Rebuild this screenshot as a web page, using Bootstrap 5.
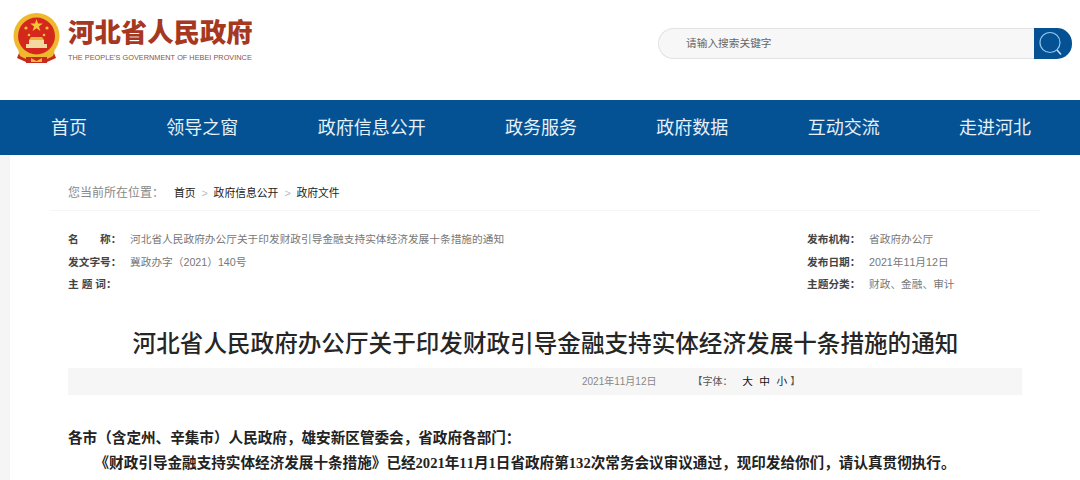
<!DOCTYPE html>
<html lang="zh-CN">
<head>
<meta charset="utf-8">
<title>河北省人民政府</title>
<link rel="stylesheet" href="https://cdn.jsdelivr.net/npm/bootstrap@5.3.0/dist/css/bootstrap.min.css">
<style>
html,body{overflow:hidden;height:480px;background:#fff}
body{font-family:"Liberation Sans","Noto Sans CJK SC",sans-serif;color:#333;text-spacing-trim:space-all;font-kerning:none}
.top-bar{height:100px;padding:12px 8px 0 13px}
.brand-name{font-size:26.4px;font-weight:900;color:#a5381f;line-height:34px}
.brand-en{font-size:7.35px;color:#8a5347;line-height:10px;margin-top:3px;white-space:nowrap}
.brand-text{margin-left:8px;margin-top:4px}
.search-box{width:376px;height:31px;margin-top:16px;background:#f7f7f7;border:1px solid #e3e3e3;border-right:0;border-radius:16px 0 0 16px;padding-left:27px;font-size:10.7px;line-height:29px;color:#666}
.search-btn{width:38px;height:31px;margin-top:16px;background:#045294;border-radius:0 15px 15px 0}
.main-nav{background:#045294;height:55px;padding:0 49px 0 51px}
.main-nav a{color:#e6f0f8;font-size:18px;text-decoration:none;line-height:57px}
.page-shell{border-left:10px solid #f5f5f5;height:325px}
.page-wrap{margin-right:40px;height:325px;position:relative}
.crumbs{height:56px;margin-left:40px;padding:21px 0 0 18px;font-size:10.8px;line-height:35px;color:#222;border-bottom:1px solid #f5f5f5}
.crumb-lead{font-size:12px;color:#888;margin-right:10px}
.crumb-sep{color:#bbb;margin:0 6px;width:6px;text-align:center}
.meta{padding:17px 0 0 58px;font-size:10.7px;color:#777;line-height:22.5px}
.meta-l{width:739px}
.meta b{color:#444;font-weight:700;display:inline-block;width:62px}
.doc-title{font-size:23.6px;font-weight:500;color:#262626;text-align:center;margin:0;padding:29px 0 0 41px;line-height:38px;white-space:nowrap}
.date-bar{margin:5px 18px 0 58px;height:27px;background:#f6f6f6;font-size:10px;color:#888;line-height:27px;padding-left:514px}
.date-bar .font-ctl{margin-left:36px;color:#555}
.date-bar .font-ctl span{color:#111;font-size:10.7px;margin:0 3.2px}
.date-bar .font-ctl span:first-child{margin-left:7px}
.doc-body{position:absolute;left:58px;top:271px;width:1000px;font-family:"Liberation Serif","Noto Sans CJK SC",serif;font-size:14.6px;font-weight:700;color:#222;line-height:25px;white-space:nowrap}
.doc-body p{margin:0}
.doc-body .ind{padding-left:26.5px}
</style>
</head>
<body>
<header class="top-bar d-flex justify-content-between">
  <div class="d-flex align-items-start">
    <svg width="47" height="52" viewBox="0 0 47 52" aria-hidden="true">
      <path d="M8 36 L4 46 L13 50 H34 L43 46 L39 36Z" fill="#c62a1c"/>
      <circle cx="23.5" cy="24" r="23" fill="#efb92e"/>
      <circle cx="23.5" cy="24" r="18.5" fill="#d5281c"/>
      <polygon points="23.5,7 25,11.6 29.8,11.6 25.9,14.4 27.4,19 23.5,16.2 19.6,19 21.1,14.4 17.2,11.6 22,11.6" fill="#f6c53a"/>
      <circle cx="13" cy="16" r="1.6" fill="#f6c53a"/><circle cx="34" cy="16" r="1.6" fill="#f6c53a"/>
      <circle cx="16" cy="23" r="1.3" fill="#f6c53a"/><circle cx="31" cy="23" r="1.3" fill="#f6c53a"/>
      <path d="M13 36 V32 H16 V28 H31 V32 H34 V36Z" fill="#f3d9a0"/>
      <path d="M18 25 H29 L31 28 H16Z" fill="#e9b33a"/>
      <path d="M5 38 Q23.5 52 42 38 L40 44 Q23.5 54 7 44Z" fill="#efb92e"/>
      <rect x="13" y="45" width="21" height="6" fill="#c62a1c"/>
      <path d="M18 46 L23.5 49 L29 46 V50 H18Z" fill="#efb92e"/>
    </svg>
    <div class="brand-text">
      <div class="brand-name">河北省人民政府</div>
      <div class="brand-en">THE PEOPLE'S GOVERNMENT OF HEBEI PROVINCE</div>
    </div>
  </div>
  <div class="d-flex">
    <div class="search-box">请输入搜索关键字</div>
    <div class="search-btn d-flex align-items-center">
      <svg width="27" height="27" class="ms-1" viewBox="0 0 27 27" aria-hidden="true"><circle cx="12" cy="12.5" r="10" fill="none" stroke="#8fc4ec" stroke-width="1.2"/><path d="M19 20 L23 24.5" stroke="#cfe6f8" stroke-width="1.4" fill="none"/></svg>
    </div>
  </div>
</header>
<nav class="main-nav d-flex justify-content-between">
  <a href="#">首页</a><a href="#">领导之窗</a><a href="#">政府信息公开</a><a href="#">政务服务</a><a href="#">政府数据</a><a href="#">互动交流</a><a href="#">走进河北</a>
</nav>
<div class="page-shell">
<main class="page-wrap">
  <div class="crumbs d-flex">
    <span class="crumb-lead">您当前所在位置：</span><span>首页</span><span class="crumb-sep">&gt;</span><span>政府信息公开</span><span class="crumb-sep">&gt;</span><span>政府文件</span>
  </div>
  <div class="meta d-flex">
    <div class="meta-l">
      <div><b>名　　称：</b>河北省人民政府办公厅关于印发财政引导金融支持实体经济发展十条措施的通知</div>
      <div><b>发文字号：</b>冀政办字（2021）140号</div>
      <div><b>主 题 词：</b></div>
    </div>
    <div class="meta-r">
      <div><b>发布机构：</b>省政府办公厅</div>
      <div><b>发布日期：</b>2021年11月12日</div>
      <div><b>主题分类：</b>财政、金融、审计</div>
    </div>
  </div>
  <h1 class="doc-title">河北省人民政府办公厅关于印发财政引导金融支持实体经济发展十条措施的通知</h1>
  <div class="date-bar">2021年11月12日<span class="font-ctl">【字体： <span>大</span><span>中</span><span>小</span>】</span></div>
  <div class="doc-body">
    <p>各市（含定州、辛集市）人民政府，雄安新区管委会，省政府各部门：</p>
    <p class="ind">《财政引导金融支持实体经济发展十条措施》已经2021年11月1日省政府第132次常务会议审议通过，现印发给你们，请认真贯彻执行。</p>
  </div>
</main>
</div>
<script src="https://cdn.jsdelivr.net/npm/bootstrap@5.3.0/dist/js/bootstrap.bundle.min.js"></script>
</body>
</html>
